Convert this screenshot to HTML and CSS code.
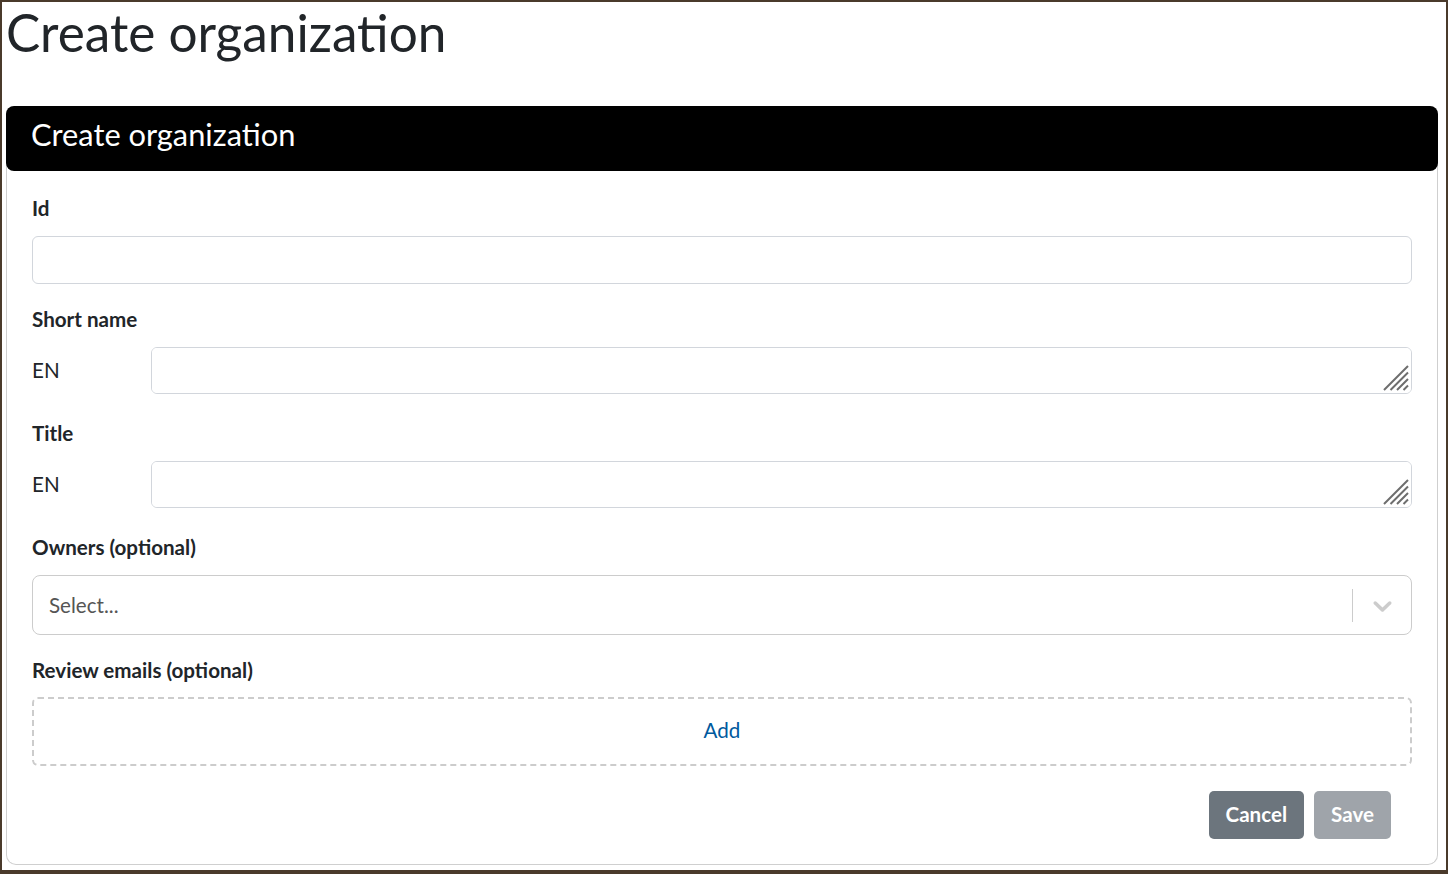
FILE: index.html
```html
<!DOCTYPE html>
<html lang="en">
<head>
  <meta charset="UTF-8" />
  <meta name="viewport" content="width=device-width, initial-scale=1.0"/>
  <title>Create organization</title>

  <link rel="stylesheet" href="styles.css">
</head>
<body>

  <div class="page">
    <h1 class="page-title">Create organization</h1>

    <section class="card">
      <div class="card-header">
        <h2>Create organization</h2>
      </div>

      <form class="card-body" onsubmit="return false;">
        <div class="field">
          <label for="orgId">Id</label>
          <input type="text" id="orgId" class="form-control"/>
        </div>

        <div class="field field-lang">
          <label>Short name</label>
          <div class="lang-row">
            <span class="lang">EN</span>
            <div class="textarea-wrap">
              <textarea class="form-control" rows="1"></textarea>
              <svg class="grip" width="26" height="26" viewBox="0 0 26 26">
                <path d="M1 25L25 1M7.5 25L25 7.5M14 25L25 14M20.5 25L25 20.5"/>
              </svg>
            </div>
          </div>
        </div>

        <div class="field field-lang">
          <label>Title</label>
          <div class="lang-row">
            <span class="lang">EN</span>
            <div class="textarea-wrap">
              <textarea class="form-control" rows="1"></textarea>
              <svg class="grip" width="26" height="26" viewBox="0 0 26 26">
                <path d="M1 25L25 1M7.5 25L25 7.5M14 25L25 14M20.5 25L25 20.5"/>
              </svg>
            </div>
          </div>
        </div>

        <div class="field">
          <label>Owners (optional)</label>
          <div class="select-control">
            <span class="select-placeholder">Select...</span>
            <span class="select-separator"></span>
            <span class="select-indicator">
              <svg width="31" height="31" viewBox="0 0 20 20">
                <path d="M4.516 7.548c0.436-0.446 1.043-0.481 1.576 0l3.908 3.747 3.908-3.747c0.533-0.481 1.141-0.446 1.574 0 0.436 0.445 0.408 1.197 0 1.615-0.406 0.418-4.695 4.502-4.695 4.502-0.217 0.223-0.502 0.335-0.787 0.335s-0.57-0.112-0.789-0.335c0 0-4.287-4.084-4.695-4.502s-0.436-1.17 0-1.615z"/>
              </svg>
            </span>
          </div>
        </div>

        <div class="field">
          <label>Review emails (optional)</label>
          <button type="button" class="add-box">Add</button>
        </div>

        <div class="actions">
          <button type="button" class="btn btn-secondary">Cancel</button>
          <button type="submit" class="btn btn-secondary" disabled>Save</button>
        </div>
      </form>
    </section>
  </div>

</body>
</html>
```

FILE: styles.css
```css
* {
  box-sizing: border-box;
}

html, body {
  margin: 0;
  height: 100%;
}

body {
  font-family: Lato, "Open Sans", sans-serif;
  color: #212529;
  background: #fff;
}

.page {
  height: 874px;
  border-style: solid;
  border-color: #4a3a2b;
  border-width: 2px 2px 4px 2px;
  padding: 0 8px 0 4px;
  overflow: hidden;
}

.page-title {
  margin: 0 0 44px;
  font-size: 51.3px;
  font-weight: 400;
  line-height: 60px;
}

.card {
  border: 1px solid #cfcfcf;
  border-top: none;
  border-radius: 10px;
}

.card-header {
  margin: 0 -1px;
  padding: 11px 26px 18px 25px;
  background: #000;
  color: #fff;
  border-radius: 8px;
}

.card-header h2 {
  margin: 0;
  font-size: 30.8px;
  font-weight: 400;
  line-height: 36px;
}

.card-body {
  padding: 22px 25px 25px;
}

.field {
  margin-bottom: 20px;
}

.field-lang {
  margin-bottom: 24px;
}

.field label {
  display: block;
  font-size: 20.6px;
  font-weight: 700;
  line-height: 30px;
  margin-bottom: 13px;
}

.form-control {
  display: block;
  width: 100%;
  height: 48px;
  padding: 8px 16px;
  font-family: inherit;
  font-size: 20.6px;
  line-height: 30px;
  color: #212529;
  background: #fff;
  border: 1px solid #d2d6dc;
  border-radius: 6px;
}

.lang-row {
  display: flex;
  align-items: center;
}

.lang {
  width: 119px;
  flex-shrink: 0;
  font-size: 20.6px;
  line-height: 30px;
  margin-bottom: 2px;
}

.textarea-wrap {
  position: relative;
  flex: 1;
}

.textarea-wrap textarea {
  height: 47px;
  resize: none;
}

.grip {
  position: absolute;
  right: 3px;
  bottom: 3px;
}

.grip path {
  stroke: #6e6e6e;
  stroke-width: 2;
  fill: none;
}

.select-control {
  display: flex;
  align-items: center;
  height: 60px;
  border: 1px solid #cccccc;
  border-radius: 8px;
  background: #fff;
}

.select-placeholder {
  flex: 1;
  padding-left: 16px;
  font-size: 20.6px;
  color: #555;
}

.select-separator {
  width: 1px;
  height: 33px;
  background: #cccccc;
}

.select-indicator {
  width: 58px;
  display: flex;
  align-items: center;
  justify-content: center;
}

.select-indicator svg {
  fill: #cccccc;
  display: block;
}

.add-box {
  display: block;
  width: 100%;
  height: 69px;
  margin-top: -1px;
  padding: 0 0 4px;
  font-family: inherit;
  font-size: 20.6px;
  color: #005a9e;
  background: #fff;
  border: 2px dashed #cccccc;
  border-radius: 6px;
  cursor: pointer;
}

.actions {
  display: flex;
  justify-content: flex-end;
  gap: 10px;
  padding-right: 21px;
  margin-top: 25px;
}

.btn {
  padding: 8px 17px 10px;
  font-family: inherit;
  font-size: 20.6px;
  font-weight: 700;
  line-height: 30px;
  border: none;
  border-radius: 5px;
  cursor: pointer;
}

.btn-secondary {
  background: #6c757d;
  color: #fff;
}

.btn-secondary:disabled {
  opacity: 0.65;
  cursor: default;
}
```
